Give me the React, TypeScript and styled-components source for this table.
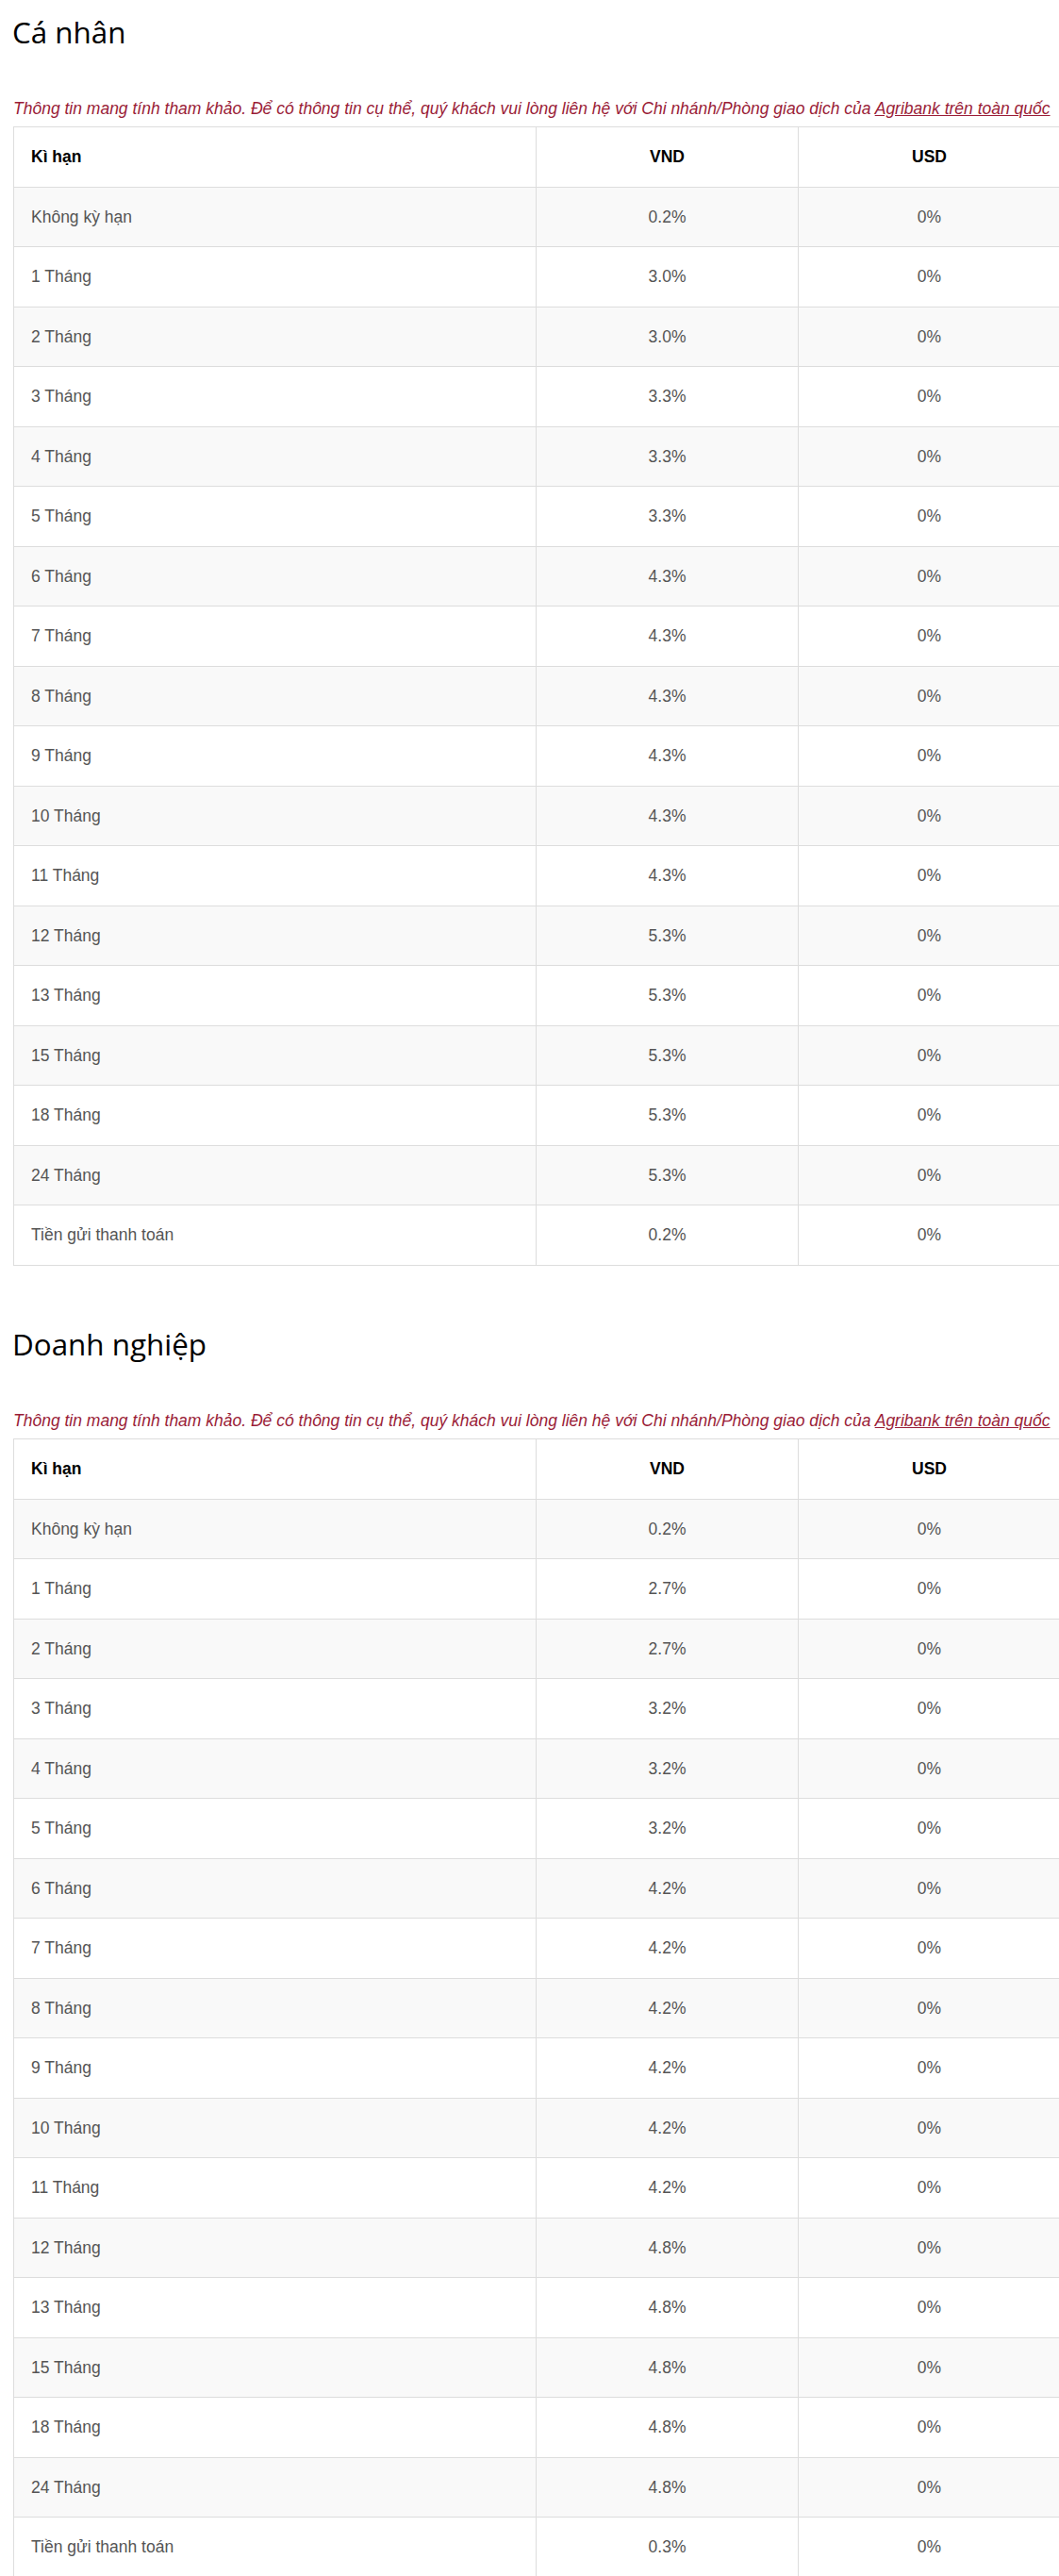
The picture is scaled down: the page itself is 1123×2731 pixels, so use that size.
import React from "react";
import styled, { createGlobalStyle } from "styled-components";

const GlobalStyle = createGlobalStyle`
  html, body {
    margin: 0;
    padding: 0;
    background: #ffffff;
    overflow-x: hidden;
  }
  body {
    font-family: "Liberation Sans", Arial, sans-serif;
  }
`;

const Page = styled.div`
  width: 1123px;
  overflow: hidden;
  display: flex;
  flex-direction: column;
  gap: 49.5px;
`;

const Section = styled.section`
  display: flex;
  flex-direction: column;
  padding-left: 14px;
`;

const Heading = styled.h2`
  margin: 17px 0 0 -1px;
  font-family: "Open Sans", "Noto Sans", sans-serif;
  font-weight: 400;
  font-size: 31.4px;
  line-height: 33px;
  color: #000;
`;

const Note = styled.p`
  margin: 55px 0 8.5px 0;
  font-family: "Liberation Sans", Arial, sans-serif;
  font-style: italic;
  font-size: 17.5px;
  line-height: 20.5px;
  color: #9a1c37;
  white-space: nowrap;
`;

const NoteLink = styled.a`
  color: #9a1c37;
  text-decoration: underline;
`;

const Table = styled.table`
  width: 1110px;
  table-layout: fixed;
  border-collapse: collapse;
  border: 1px solid #dddddd;
  font-family: "Liberation Sans", Arial, sans-serif;
  font-size: 17.5px;
`;

const Col = styled.col<{ $w: number }>`
  width: ${(p) => p.$w}px;
`;

const Row = styled.tr<{ $striped?: boolean }>`
  background: ${(p) => (p.$striped ? "#f9f9f9" : "#ffffff")};
`;

const HeadCell = styled.th<{ $center?: boolean }>`
  padding: 20px 18px;
  line-height: 22.5px;
  font-weight: 700;
  color: #000;
  text-align: ${(p) => (p.$center ? "center" : "left")};
  border: 1px solid #dddddd;
`;

const Cell = styled.td<{ $center?: boolean }>`
  padding: 20px 18px;
  line-height: 22.5px;
  color: #555555;
  text-align: ${(p) => (p.$center ? "center" : "left")};
  border: 1px solid #dddddd;
`;

const terms = [
  "Không kỳ hạn",
  "1 Tháng",
  "2 Tháng",
  "3 Tháng",
  "4 Tháng",
  "5 Tháng",
  "6 Tháng",
  "7 Tháng",
  "8 Tháng",
  "9 Tháng",
  "10 Tháng",
  "11 Tháng",
  "12 Tháng",
  "13 Tháng",
  "15 Tháng",
  "18 Tháng",
  "24 Tháng",
  "Tiền gửi thanh toán",
];

const personal = [
  "0.2", "3.0", "3.0", "3.3", "3.3", "3.3", "4.3", "4.3", "4.3", "4.3",
  "4.3", "4.3", "5.3", "5.3", "5.3", "5.3", "5.3", "0.2",
];

const business = [
  "0.2", "2.7", "2.7", "3.2", "3.2", "3.2", "4.2", "4.2", "4.2", "4.2",
  "4.2", "4.2", "4.8", "4.8", "4.8", "4.8", "4.8", "0.3",
];

function RateSection({ title, rates }: { title: string; rates: string[] }) {
  return (
    <Section>
      <Heading>{title}</Heading>
      <Note>
        Thông tin mang tính tham khảo. Để có thông tin cụ thể, quý khách vui
        lòng liên hệ với Chi nhánh/Phòng giao dịch của{" "}
        <NoteLink href="#">Agribank trên toàn quốc</NoteLink>
      </Note>
      <Table>
        <colgroup>
          <Col $w={554} />
          <Col $w={278} />
          <Col $w={278} />
        </colgroup>
        <thead>
          <Row>
            <HeadCell>Kì hạn</HeadCell>
            <HeadCell $center>VND</HeadCell>
            <HeadCell $center>USD</HeadCell>
          </Row>
        </thead>
        <tbody>
          {terms.map((t, i) => (
            <Row key={t} $striped={i % 2 === 0}>
              <Cell>{t}</Cell>
              <Cell $center>{rates[i]}%</Cell>
              <Cell $center>0%</Cell>
            </Row>
          ))}
        </tbody>
      </Table>
    </Section>
  );
}

export default function App() {
  return (
    <>
      <GlobalStyle />
      <Page>
        <RateSection title="Cá nhân" rates={personal} />
        <RateSection title="Doanh nghiệp" rates={business} />
      </Page>
    </>
  );
}
